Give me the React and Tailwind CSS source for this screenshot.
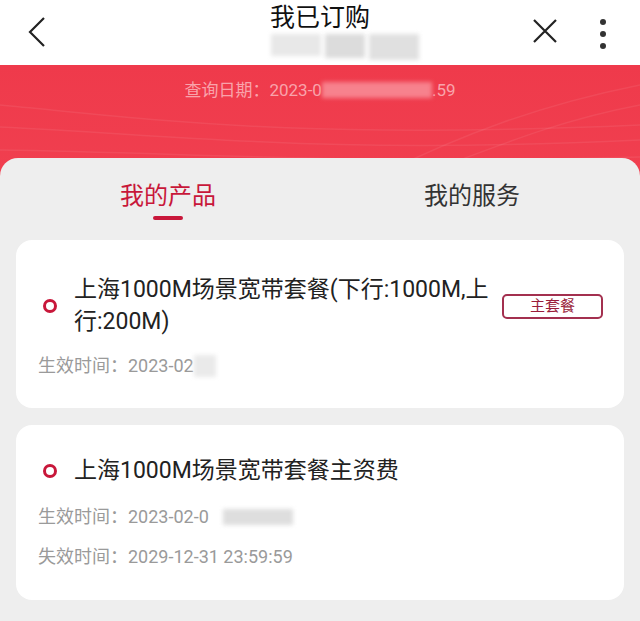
import React from 'react';

const font = { fontFamily: 'Roboto, "Noto Sans CJK SC", "Noto Sans", sans-serif' };

function Blur({ className }) {
  return <span className={`inline-block align-middle blur-[2px] ${className}`} />;
}

function Ring() {
  return <span className="shrink-0 w-[14px] h-[14px] rounded-full border-[3px] border-[#c8173a]" />;
}

export default function App() {
  return (
    <div className="w-[640px] h-[621px] overflow-hidden bg-[#eeeeee]" style={font}>
      {/* 顶部栏 */}
      <div className="relative h-[65px] bg-white flex items-start justify-center">
        <svg className="absolute left-[26px] top-[16px]" width="22" height="32" viewBox="0 0 22 32" fill="none" stroke="#222" strokeWidth="2.2">
          <path d="M18 2 L4 16 L18 30" />
        </svg>
        <div className="flex flex-col items-center">
          <div className="text-[25px] leading-[36px] text-[#111]">我已订购</div>
          <div className="flex gap-1 mt-[-2px] ml-[50px]">
            <Blur className="w-[50px] h-[22px] bg-[#e8e8e8]" />
            <Blur className="w-[40px] h-[24px] bg-[#dcdcdc]" />
            <Blur className="w-[50px] h-[26px] bg-[#e0e0e0]" />
          </div>
        </div>
        <svg className="absolute left-[532px] top-[18px]" width="26" height="26" viewBox="0 0 26 26" stroke="#222" strokeWidth="2.2">
          <path d="M2 2 L24 24 M24 2 L2 24" />
        </svg>
        <div className="absolute left-[600px] top-[19px] flex flex-col gap-[6px]">
          <span className="w-[6px] h-[6px] rounded-full bg-[#333]" />
          <span className="w-[6px] h-[6px] rounded-full bg-[#333]" />
          <span className="w-[6px] h-[6px] rounded-full bg-[#333]" />
        </div>
      </div>

      {/* 红色区域 */}
      <div className="relative bg-gradient-to-b from-[#ef3a4b] to-[#f6505f]">
        <svg className="absolute left-0 top-0" width="640" height="110" viewBox="0 0 640 110" fill="none" stroke="#fff" strokeOpacity="0.07" strokeWidth="1.5">
          <path d="M0 40 C160 55 300 75 640 60" />
          <path d="M0 62 C180 70 320 90 640 75" />
          <path d="M0 85 C200 88 360 100 640 92" />
          <path d="M380 110 C460 70 540 40 640 20" />
          <path d="M420 110 C500 80 560 55 640 40" />
        </svg>
        <div className="relative h-[93px] flex items-start justify-center pt-[12px]">
          <div className="text-[17px] leading-[26px] text-[#f9a3ab] flex items-center">
            查询日期：2023-0
            <Blur className="w-[110px] h-[16px] bg-[#f7828d]" />
            <span>.59</span>
          </div>
        </div>

        {/* 灰色面板 */}
        <div className="relative bg-[#eeeeee] rounded-t-[18px] px-4">
          <div className="flex h-[82px]">
            <div className="flex-1 flex flex-col items-center pt-[23px]">
              <span className="text-[24px] leading-[30px] text-[#c8173a]">我的产品</span>
              <span className="mt-[5px] w-[30px] h-[4px] rounded-full bg-[#c8173a]" />
            </div>
            <div className="flex-1 flex flex-col items-center pt-[23px]">
              <span className="text-[24px] leading-[30px] text-[#333]">我的服务</span>
            </div>
          </div>

          {/* 卡片一 */}
          <div className="bg-white rounded-[16px] h-[168px] px-[22px] pt-[34px]">
            <div className="flex items-center">
              <div className="w-[36px] flex justify-start pl-[5px]">
                <Ring />
              </div>
              <div className="w-[425px] text-[23px] leading-[32px] text-[#222]">
                上海1000M场景宽带套餐(下行:1000M,上行:200M)
              </div>
              <div className="ml-auto mr-[-1px] w-[101px] h-[25px] border-2 border-[#a3304f] rounded-[5px] flex items-center justify-center text-[15px] text-[#9a1d3a]">
                主套餐
              </div>
            </div>
            <div className="mt-[16px] text-[18px] leading-[24px] text-[#9a9a9a] flex items-center">
              生效时间：2023-02
              <Blur className="w-[22px] h-[22px] bg-[#eaeaea]" />
            </div>
          </div>

          {/* 卡片二 */}
          <div className="mt-[17px] bg-white rounded-[16px] h-[175px] px-[22px] pt-[30px]">
            <div className="flex items-center">
              <div className="w-[36px] flex justify-start pl-[5px]">
                <Ring />
              </div>
              <div className="text-[23px] leading-[32px] text-[#222]">上海1000M场景宽带套餐主资费</div>
            </div>
            <div className="mt-[18px] text-[18px] leading-[24px] text-[#9a9a9a] flex items-center">
              生效时间：2023-02-0
              <Blur className="ml-[14px] w-[70px] h-[16px] bg-[#dedede]" />
            </div>
            <div className="mt-[16px] text-[18px] leading-[24px] text-[#9a9a9a]">失效时间：2029-12-31 23:59:59</div>
          </div>
        </div>
      </div>
    </div>
  );
}
